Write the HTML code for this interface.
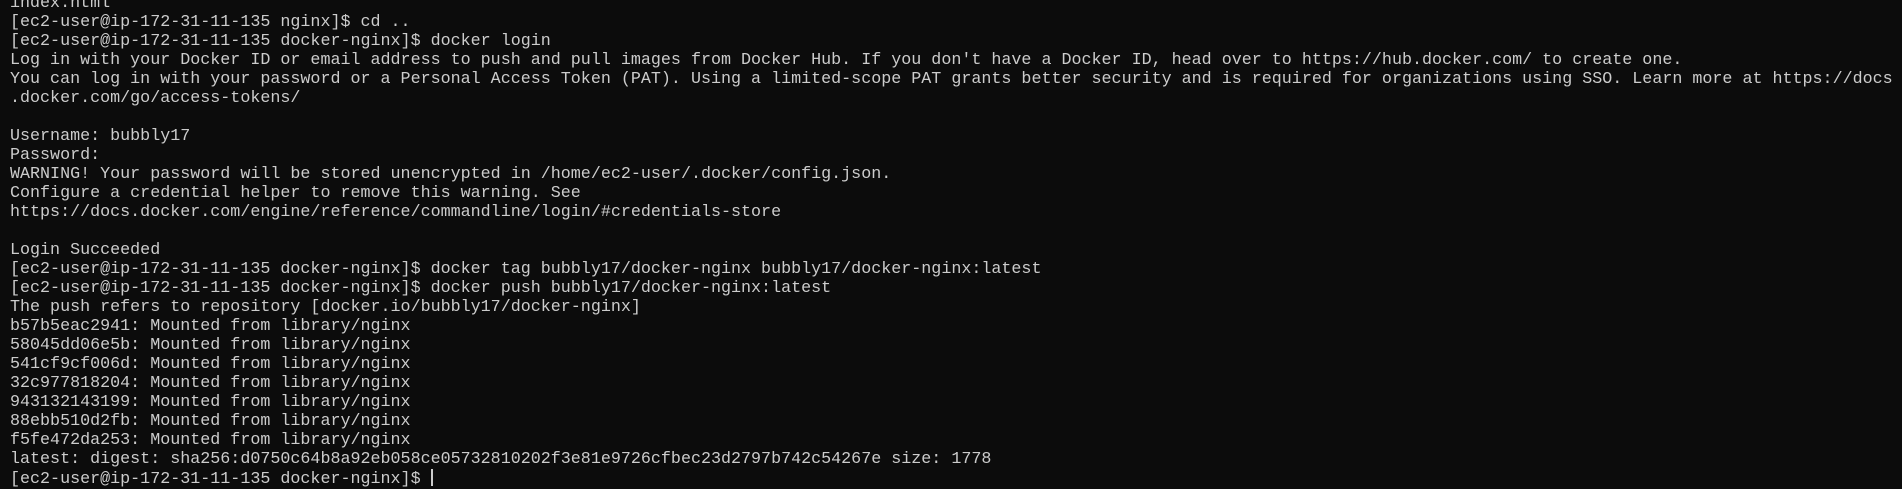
<!DOCTYPE html>
<html><head><meta charset="utf-8"><style>
html,body{margin:0;padding:0;background:#0c0c0c;width:1902px;height:477px;overflow:hidden}
pre{margin:0;position:absolute;left:10px;top:-5.8px;font-family:"Liberation Mono","DejaVu Sans Mono",monospace;font-size:16.7px;line-height:19px;color:#cccccc;white-space:pre}
.cur{display:inline-block;width:2px;height:17px;background:#cccccc;vertical-align:-3px}
</style></head><body><pre>index.html
[ec2-user@ip-172-31-11-135 nginx]$ cd ..
[ec2-user@ip-172-31-11-135 docker-nginx]$ docker login
Log in with your Docker ID or email address to push and pull images from Docker Hub. If you don't have a Docker ID, head over to https://hub.docker.com/ to create one.
You can log in with your password or a Personal Access Token (PAT). Using a limited-scope PAT grants better security and is required for organizations using SSO. Learn more at https://docs
.docker.com/go/access-tokens/

Username: bubbly17
Password:
WARNING! Your password will be stored unencrypted in /home/ec2-user/.docker/config.json.
Configure a credential helper to remove this warning. See
https://docs.docker.com/engine/reference/commandline/login/#credentials-store

Login Succeeded
[ec2-user@ip-172-31-11-135 docker-nginx]$ docker tag bubbly17/docker-nginx bubbly17/docker-nginx:latest
[ec2-user@ip-172-31-11-135 docker-nginx]$ docker push bubbly17/docker-nginx:latest
The push refers to repository [docker.io/bubbly17/docker-nginx]
b57b5eac2941: Mounted from library/nginx
58045dd06e5b: Mounted from library/nginx
541cf9cf006d: Mounted from library/nginx
32c977818204: Mounted from library/nginx
943132143199: Mounted from library/nginx
88ebb510d2fb: Mounted from library/nginx
f5fe472da253: Mounted from library/nginx
latest: digest: sha256:d0750c64b8a92eb058ce05732810202f3e81e9726cfbec23d2797b742c54267e size: 1778
[ec2-user@ip-172-31-11-135 docker-nginx]$ <span class="cur"></span></pre></body></html>
